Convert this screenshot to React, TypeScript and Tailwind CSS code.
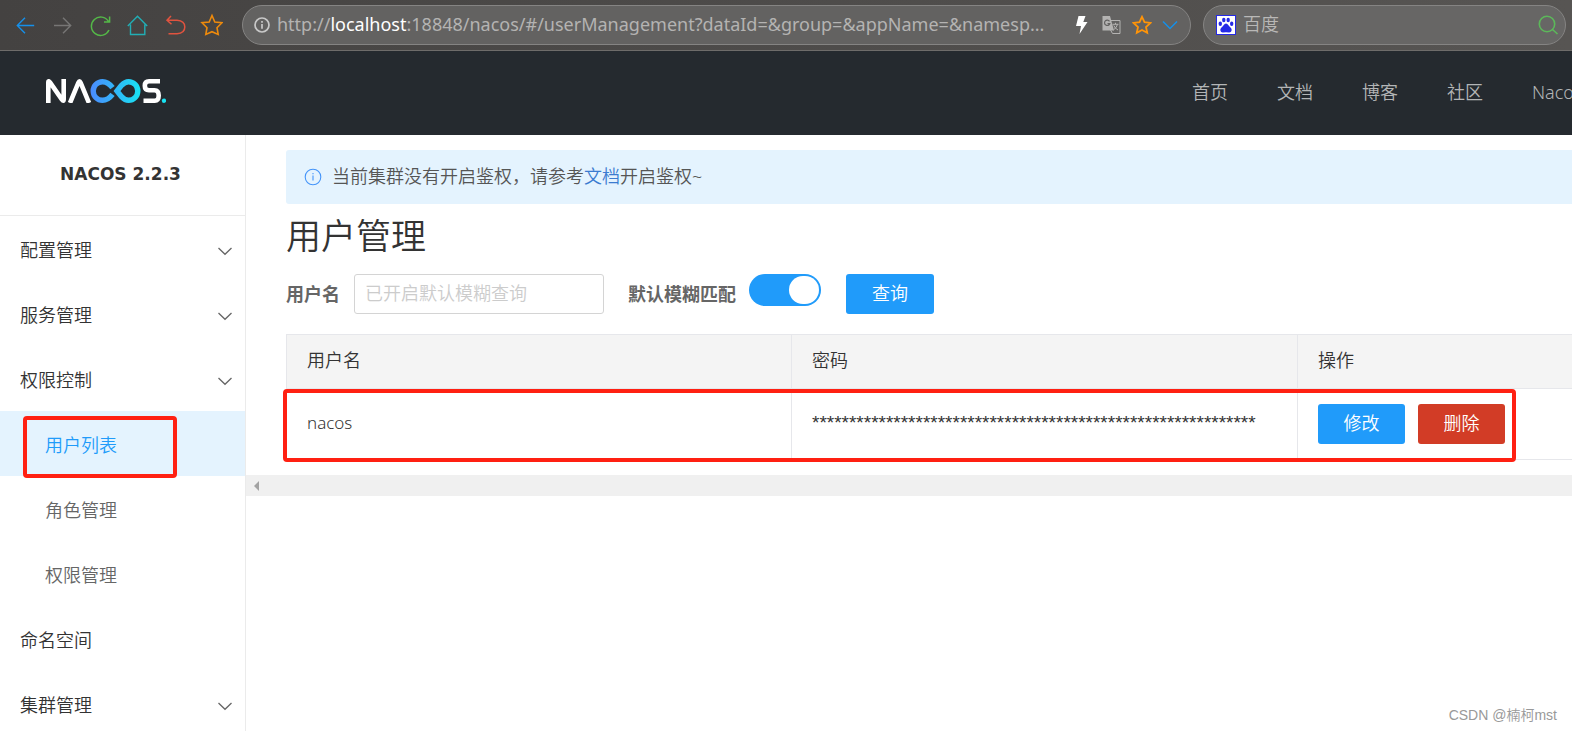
import React from "react";

const cjk = "font-['Noto_Sans','Noto_Sans_CJK_SC',sans-serif]";

function Chevron() {
  return (
    <svg className="h-4 w-4 text-[#666]" viewBox="0 0 16 16" fill="none" stroke="currentColor" strokeWidth="1.3">
      <path d="M1.5 5 8 11.3 14.5 5" />
    </svg>
  );
}

function NacosLogo() {
  return (
    <svg className="h-6 w-30" viewBox="0 0 120 24" fill="none" role="img" aria-label="NACOS">
      <defs>
        <linearGradient id="loop" x1="45" y1="0" x2="94" y2="0" gradientUnits="userSpaceOnUse">
          <stop offset="0" stopColor="#4a8cff" />
          <stop offset="1" stopColor="#18e2f2" />
        </linearGradient>
      </defs>
      <g stroke="#fff" strokeWidth="4.6">
        <path d="M2.300 24V3.600Q2.300 1 4 3.400L15.800 20.400Q17.700 23 17.700 20.300V0" />
        <path d="M24 24 32.400 3.600Q33.500 1.200 34.600 3.600L43 24" />
        <path d="M114 2.300H103Q98.800 2.300 98.800 6.700T103 11.200H108.500Q112.700 11.200 112.700 16.500T108.500 21.700H97.500" />
      </g>
      <g stroke="url(#loop)" strokeWidth="5.400">
        <path d="M66.500 8.600Q62 2.700 56.500 2.700A9.300 9.300 0 0 0 56.500 21.300Q62 21.300 66.500 15.400" />
        <path d="M71 12 75.500 6.400Q79 2.700 82.500 2.700A9.300 9.300 0 0 1 82.500 21.300Q79 21.300 75.500 17.600Z" />
      </g>
      <circle cx="118" cy="21.700" r="2.200" fill="#18e2f2" />
    </svg>
  );
}

const toolIcon = "h-6 w-6 shrink-0";

function BrowserBar() {
  return (
    <div className="flex h-[51px] items-center border-b border-[#6e6c6a] bg-linear-to-r from-[#444241] to-[#575553] pr-[6px] pl-[14px]">
      <div className="flex w-[228px] shrink-0 items-center gap-[13px]">
        <button aria-label="后退">
          <svg className={toolIcon} viewBox="0 0 24 24" fill="none" stroke="#1590ea" strokeWidth="1.4">
            <path d="M20.200 12.500H3.500M11 4.800 3.300 12.500 11 20.200" />
          </svg>
        </button>
        <button aria-label="前进">
          <svg className={toolIcon} viewBox="0 0 24 24" fill="none" stroke="#777675" strokeWidth="1.400">
            <path d="M3 12.500H20M12 4.800 19.700 12.500 12 20.200" />
          </svg>
        </button>
        <button aria-label="刷新">
          <svg className={toolIcon} viewBox="0 0 24 24" fill="none" stroke="#54b848" strokeWidth="1.500">
            <path d="M21 17A9.200 9.200 0 1 1 20.500 8.500M21.600 3.500V8.900H16" />
          </svg>
        </button>
        <button aria-label="主页">
          <svg className={toolIcon} viewBox="0 0 24 24" fill="none" stroke="#22aeb5" strokeWidth="1.400">
            <path d="M2.800 13 12.500 3.200 22.200 13M5.500 11.500V21.500H19.800V11.500" />
          </svg>
        </button>
        <button aria-label="恢复">
          <svg className={toolIcon} viewBox="0 0 24 24" fill="none" stroke="#e0533f" strokeWidth="1.500">
            <path d="M9 3 5 7.200 9.500 11.300M5 7.200H15Q22.800 7.700 22.800 14T15 20.800H6.500" />
          </svg>
        </button>
        <button aria-label="收藏夹">
          <svg className={toolIcon} viewBox="0 0 24 24" fill="none" stroke="#ee8a0c" strokeWidth="1.600">
            <path d="M13 2.500 15.800 9 23 9.700 18 14.700 19.200 21.500 13 18.700 6.800 21.500 8 14.700 3 9.700 10.200 9Z" />
          </svg>
        </button>
      </div>

      <div className="flex h-10 min-w-0 flex-1 items-center rounded-full border border-[#858483] bg-[#636261] pr-3 pl-[10px]">
        <svg className="h-[18px] w-[18px] shrink-0" viewBox="0 0 18 18" fill="none" stroke="#c8c8c8" strokeWidth="1.700">
          <circle cx="9" cy="9" r="7" />
          <path d="M9 8V12.800M9 5V6.700" />
        </svg>
        <div className="ml-[6px] min-w-0 flex-1 truncate pb-[2px] text-[18px] text-[#b4b3b2]">
          http://<span className="text-white">localhost</span>
          :18848/nacos/#/userManagement?dataId=&amp;group=&amp;appName=&amp;namesp...
        </div>
        <div className="ml-4 flex shrink-0 items-center gap-[10px]">
          <svg className="h-5 w-5" viewBox="0 0 20 20" fill="#fff">
            <path d="M6.500 1H13.500L11.300 7H15.500L7.500 19 9 11H4Z" />
          </svg>
          <svg className="h-5 w-5" viewBox="0 0 20 20">
            <path d="M8 5.500H18V18.500H10.500L8 14Z" fill="none" stroke="#b4b3b2" />
            <path d="M.5 1H8L12 15.500H.5Z" fill="#b4b3b2" />
            <path d="M7.500 6.300A2.700 2.700 0 1 0 7.800 8.700H5.500" fill="none" stroke="#636261" strokeWidth="1.200" />
            <path d="M10.500 9.300H16.500M13.500 7.800V9.300M15.500 9.300Q14.700 13 11.300 15M11.800 10.500Q13 13.500 16 15" fill="none" stroke="#b4b3b2" />
          </svg>
          <svg className="h-5 w-5" viewBox="0 0 20 20" fill="none" stroke="#ff9408" strokeWidth="1.800">
            <path d="M10 1.800 12.500 7.200 18.400 7.900 14 12 15.200 17.700 10 14.900 4.800 17.700 6 12 1.600 7.900 7.500 7.200Z" />
          </svg>
          <svg className="h-4 w-4" viewBox="0 0 16 16" fill="none" stroke="#1590ea" strokeWidth="1.500">
            <path d="M1 4.500 8 11.500 15 4.500" />
          </svg>
        </div>
      </div>

      <div className="ml-3 flex h-10 w-[363px] shrink-0 items-center rounded-full border border-[#858483] bg-[#676665] pr-[5px] pl-3">
        <svg className="h-5 w-5 shrink-0" viewBox="0 0 20 20">
          <rect width="20" height="20" fill="#2529e6" />
          <rect x="1" y="1" width="18" height="18" fill="#fff" />
          <g fill="#2529e6">
            <ellipse cx="4.300" cy="8.700" rx="1.700" ry="2.200" />
            <ellipse cx="7.800" cy="5" rx="1.700" ry="2.300" />
            <ellipse cx="12.200" cy="5" rx="1.700" ry="2.300" />
            <ellipse cx="15.700" cy="8.700" rx="1.700" ry="2.200" />
            <path d="M10 8.600C12 8.600 12.500 11 14.500 12.500S15.800 17.700 13 17.500Q10 17 7 17.500C4.200 17.700 3.500 14 5.500 12.500S8 8.600 10 8.600Z" />
          </g>
        </svg>
        <input
          aria-label="百度搜索"
          placeholder="百度"
          className="ml-[7px] min-w-0 flex-1 bg-transparent pb-[2px] text-[18px] font-[350] text-white outline-none placeholder:text-[#b9b8b7]"
        />
        <button aria-label="搜索">
          <svg className="h-6 w-6" viewBox="0 0 24 24" fill="none" stroke="#5cb85a" strokeWidth="1.600">
            <circle cx="11" cy="11" r="7.700" />
            <path d="M16.500 16.500 21.500 21" />
          </svg>
        </button>
      </div>
    </div>
  );
}

function SiteHeader() {
  return (
    <header className="flex h-[84px] items-center justify-between bg-[#252a2f] pl-[46px]">
      <a href="#/" className="-mt-1">
        <NacosLogo />
      </a>
      <nav className="flex w-[380px] shrink-0 gap-[49px] overflow-hidden pb-[2px] text-[18px] whitespace-nowrap text-[#b3b5b6]">
        {["首页", "文档", "博客", "社区", "Nacos企业版"].map((item) => (
          <a key={item} href="#/" className="shrink-0 font-[350]">
            {item}
          </a>
        ))}
      </nav>
    </header>
  );
}

function Sidebar() {
  const item = "flex h-[65px] items-center justify-between pt-1 pr-3 text-[18px] font-[350]";
  return (
    <aside className="w-[246px] shrink-0 border-r border-[#ebebeb]">
      <h3 className="flex h-[81px] items-center justify-center border-b border-[#ebebeb] pr-[4px] font-['DejaVu_Sans',sans-serif] text-[17px] font-bold text-[#333]">
        NACOS 2.2.3
      </h3>
      <ul className="text-[#333]">
        <li><a href="#/config" className={`${item} pl-[20px]`}>配置管理<Chevron /></a></li>
        <li><a href="#/service" className={`${item} pl-[20px]`}>服务管理<Chevron /></a></li>
        <li>
          <a href="#/auth" className={`${item} pl-[20px]`}>权限控制<Chevron /></a>
          <ul className="text-[#666]">
            <li className="relative">
              <a href="#/users" className={`${item} bg-[#e4f3fe] pl-[45px] text-[#209bfa]`}>用户列表</a>
              <span className="pointer-events-none absolute top-[5px] left-[23px] h-[62px] w-[154px] rounded-[4px] border-4 border-[#ff2012]" />
            </li>
            <li><a href="#/roles" className={`${item} pl-[45px]`}>角色管理</a></li>
            <li><a href="#/permissions" className={`${item} pl-[45px]`}>权限管理</a></li>
          </ul>
        </li>
        <li><a href="#/namespace" className={`${item} pl-[20px]`}>命名空间</a></li>
        <li><a href="#/cluster" className={`${item} pl-[20px]`}>集群管理<Chevron /></a></li>
      </ul>
    </aside>
  );
}

function UserTable() {
  const cell = "border-r border-b border-[#e6e7eb] px-5 pb-[2px] text-left font-[350]";
  return (
    <div className="relative mt-5">
      <table className="w-full table-fixed border-separate border-spacing-0 border-t border-l border-[#e6e7eb] text-[18px] text-[#333]">
        <colgroup>
          <col className="w-[505px]" />
          <col className="w-[506px]" />
          <col />
        </colgroup>
        <thead className="bg-[#f4f4f4]">
          <tr className="h-[54px]">
            <th className={cell}>用户名</th>
            <th className={cell}>密码</th>
            <th className="border-b border-[#e6e7eb] px-5 pb-[2px] text-left font-[350]">操作</th>
          </tr>
        </thead>
        <tbody>
          <tr className="h-[71px]">
            <td className={`${cell} text-[17px]`}>nacos</td>
            <td className={`${cell} font-['Liberation_Sans',sans-serif] text-[19px]`}>{"*".repeat(60)}</td>
            <td className="border-b border-[#e6e7eb] px-5">
              <div className="flex gap-[13px]">
                <button className="h-10 w-[87px] rounded-[3px] bg-[#209bfa] pb-[2px] font-[350] text-white">修改</button>
                <button className="h-10 w-[87px] rounded-[3px] bg-[#d23c26] pb-[2px] font-[350] text-white">删除</button>
              </div>
            </td>
          </tr>
        </tbody>
      </table>
      <span className="pointer-events-none absolute top-[55px] -left-[3px] h-[73px] w-[1233px] rounded-[4px] border-4 border-[#ff2012]" />
    </div>
  );
}

function UserManagement() {
  return (
    <main className="min-w-0 flex-1">
      <div className="pt-[15px] pl-10">
        <div className="flex h-[54px] items-center rounded-l-[3px] bg-[#e4f3fe] pl-[18px] text-[18px] font-[350] text-[#555]">
          <svg className="mr-[10px] h-[18px] w-[18px]" viewBox="0 0 18 18" fill="none" stroke="#4494f9" strokeWidth="1.100">
            <circle cx="9" cy="9" r="7.800" />
            <path d="M9 7.500V12.500M9 5V6.300" />
          </svg>
          <p className="pb-[2px]">
            当前集群没有开启鉴权，请参考<a href="#/docs" className="text-[#3b7bd0]">文档</a>开启鉴权~
          </p>
        </div>
        <h1 className="mt-[7px] h-[52px] text-[35px] leading-[50px] font-[350] text-[#333]">用户管理</h1>
        <form className="mt-[11px] flex items-start text-[18px]" onSubmit={(e) => e.preventDefault()}>
          <label htmlFor="username" className="w-[68px] leading-10 font-bold text-[#666]">用户名</label>
          <input
            id="username"
            placeholder="已开启默认模糊查询"
            className="h-10 w-[250px] rounded-[3px] border border-[#d4d4d4] px-[10px] pb-[2px] font-[350] outline-none placeholder:text-[#ccc]"
          />
          <label htmlFor="fuzzy" className="ml-6 w-[121px] leading-10 font-bold whitespace-nowrap text-[#666]">默认模糊匹配</label>
          <span className="relative h-8 w-[72px] shrink-0">
            <input id="fuzzy" type="checkbox" role="switch" defaultChecked className="peer h-8 w-[72px] appearance-none rounded-full bg-[#ccc] checked:bg-[#209bfa]" />
            <span className="pointer-events-none absolute top-[2px] left-[2px] h-7 w-[30px] rounded-full bg-white peer-checked:left-10" />
          </span>
          <button className="ml-[25px] h-10 w-[88px] rounded-[3px] bg-[#209bfa] pb-[2px] font-[350] text-white">查询</button>
        </form>
        <UserTable />
      </div>
      <div className="mt-[15px] flex h-[21px] items-center bg-[#f0f0f0] pl-2">
        <svg className="h-[10px] w-[5px]" viewBox="0 0 5 10" fill="#a3a3a3">
          <path d="M5 0V10L0 5Z" />
        </svg>
      </div>
    </main>
  );
}

export default function App() {
  return (
    <div className={`relative flex h-screen flex-col overflow-hidden bg-white ${cjk}`}>
      <BrowserBar />
      <SiteHeader />
      <div className="flex min-h-0 flex-1">
        <Sidebar />
        <UserManagement />
      </div>
      <div className="absolute right-[15px] bottom-[5px] font-['Liberation_Sans','Noto_Sans_CJK_SC',sans-serif] text-[14px] font-[350] text-[#999]">
        CSDN @楠柯mst
      </div>
    </div>
  );
}
